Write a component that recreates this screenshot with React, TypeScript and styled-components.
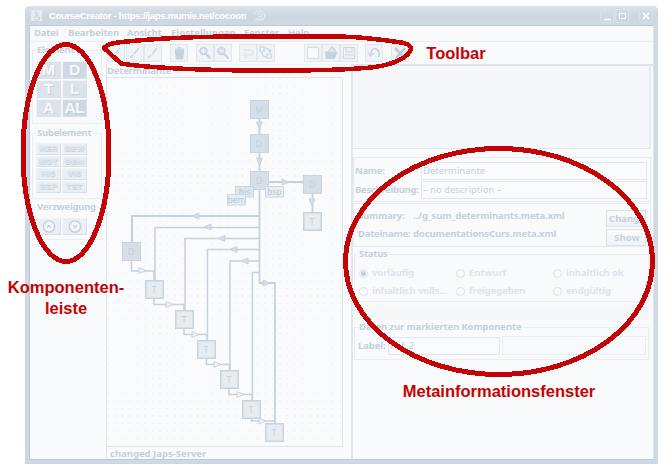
import React from "react";
import styled, { createGlobalStyle } from "styled-components";

const ink = "#c5d1dd";
const red = "#c40404";

const Global = createGlobalStyle`
  * { box-sizing: border-box; }
  body { margin: 0; background: #fff; }
`;

const Page = styled.div`
  position: relative;
  width: 667px;
  height: 472px;
  padding: 6px 9px 8px 25px;
  overflow: hidden;
  background: #fff;
  font: bold 9.5px/12px "Noto Sans", sans-serif;
  color: ${ink};
`;

const Window = styled.div`
  display: flex;
  flex-direction: column;
  width: 633px;
  height: 458px;
  border: 1px solid #cbd6e1;
  border-top: 0;
  border-radius: 5px 5px 0 0;
  background: #cfd8e3;
  padding: 0 3px 3px 3px;
`;

const TitleBar = styled.header`
  display: flex;
  align-items: center;
  height: 19px;
  flex: none;
  margin: 0 -3px;
  padding: 0 4px 0 5px;
  border-radius: 5px 5px 0 0;
  background: linear-gradient(#d9e1ea, #cdd6e1 60%, #d0d9e3);
  color: #fff;
  svg { flex: none; }
`;

const WindowTitle = styled.span<{ $w: number }>`
  width: ${(p) => p.$w}px;
  flex: none;
  margin-left: 6px;
  white-space: nowrap;
  font: bold 9.6px/12px "Liberation Sans", sans-serif;
  letter-spacing: -0.38px;
`;

const WindowButton = styled.span<{ $gap?: number }>`
  display: flex;
  flex: none;
  width: 14px;
  height: 14px;
  margin-left: ${(p) => p.$gap ?? 1}px;
  border: 1px solid #d8e0e9;
  border-radius: 2px;
`;

const Content = styled.div`
  flex: 1;
  min-height: 0;
  display: flex;
  flex-direction: column;
  border: 1px solid #bccad7;
  border-right-color: #dfe6ee;
  background: #f8fafc;
`;

const MenuBar = styled.nav`
  display: flex;
  height: 16px;
  flex: none;
  padding: 1px 0 0 4px;
  border-bottom: 1px solid #e9eef3;
`;

const MenuItem = styled.span<{ $w: number; $ls?: number }>`
  width: ${(p) => p.$w}px;
  white-space: nowrap;
  letter-spacing: ${(p) => p.$ls ?? -0.15}px;
`;

const Body = styled.div`
  display: flex;
  flex: 1;
  min-height: 0;
`;

const Palette = styled.aside`
  width: 76px;
  flex: none;
  padding: 8px 4px 0 2px;
`;

const Group = styled.section<{ $h: number; $gap?: number }>`
  height: ${(p) => p.$h}px;
  margin-bottom: ${(p) => p.$gap ?? 0}px;
  border: 1px solid #e8edf2;
  padding: 0 3px;
`;

const Legend = styled.h3<{ $ls?: number }>`
  width: max-content;
  height: 12px;
  margin: -7px 0 0 0;
  padding: 0 1px;
  background: #f8fafc;
  font: inherit;
  white-space: nowrap;
  letter-spacing: ${(p) => p.$ls ?? -0.25}px;
`;

const Tiles = styled.div<{ $row: number; $top: number }>`
  display: grid;
  grid-template-columns: 25px 25px;
  grid-auto-rows: ${(p) => p.$row}px;
  gap: 1px;
  margin-top: ${(p) => p.$top}px;
`;

const Tile = styled.div<{ $dark?: boolean; $small?: boolean }>`
  display: flex;
  align-items: center;
  justify-content: center;
  background: ${(p) => (p.$small ? "#eaeff4" : p.$dark ? "#cfd9e4" : "#dbe3eb")};
  border: 1px solid;
  border-color: #f0f4f7 #d8e0e8 #d8e0e8 #f0f4f7;
  color: ${(p) => (p.$small ? "#e3eaf0" : "#f8fafc")};
  font: bold ${(p) => (p.$small ? "8px" : "15.5px")}/1 "Liberation Sans", sans-serif;
  letter-spacing: ${(p) => (p.$small ? "0.4px" : "-0.3px")};
  text-shadow: ${(p) => (p.$small ? "0 0 1px #b9c7d5, 0.5px 0.5px 0 #c8d3df" : "1px 1px 0 #c1cedb")};
`;

const Main = styled.div`
  flex: 1;
  min-width: 0;
  display: flex;
  flex-direction: column;
`;

const ToolBar = styled.div`
  display: flex;
  height: 22px;
  flex: none;
  padding: 2px 0 0 1px;
`;

const Tool = styled.span<{ $gap?: number }>`
  width: 18px;
  height: 18px;
  flex: none;
  margin-left: ${(p) => p.$gap ?? 0}px;
  border: 1px solid #e1e7ed;
  background: #f0f4f8;
  svg { display: block; }
`;

const Split = styled.div`
  display: flex;
  flex: 1;
  min-height: 0;
`;

const GraphPane = styled.div`
  width: 245px;
  flex: none;
  border-left: 1px solid #dde4ec;
  border-top: 1px solid #eef2f6;
`;

const GraphTitle = styled.div`
  height: 12px;
  line-height: 12px;
  letter-spacing: -0.2px;
`;

const GraphStatus = styled.div`
  padding-left: 3px;
  line-height: 13px;
`;

const Diagram = styled.svg`
  display: block;
  font: 9px "Noto Sans", sans-serif;
`;

const InfoPane = styled.div`
  flex: 1;
  min-width: 0;
  border-left: 2px solid #dfe6ee;
  border-top: 2px solid #dde4ec;
`;

const Preview = styled.div`
  height: 83px;
  margin-right: 2px;
  background: #f5f7fa;
  border-right: 2px solid #e7ecf2;
  border-bottom: 1px solid #e1e7ee;
`;

const MetaBox = styled.div<{ $top: number; $h: number; $padTop: number }>`
  display: grid;
  align-content: start;
  height: ${(p) => p.$h}px;
  margin: ${(p) => p.$top}px 2px 0 0;
  padding: ${(p) => p.$padTop}px 3px 0 1px;
  border: 1px solid #e6ebf1;
`;

const FieldRow = styled.div<{ $h: number }>`
  display: flex;
  align-items: center;
  height: ${(p) => p.$h}px;
`;

const Caption = styled.span<{ $w: number; $pad?: number; $ls?: number; $lift?: number }>`
  width: ${(p) => p.$w}px;
  flex: none;
  padding-left: ${(p) => p.$pad ?? 0}px;
  padding-bottom: ${(p) => p.$lift ?? 0}px;
  white-space: nowrap;
  letter-spacing: ${(p) => p.$ls ?? 0}px;
`;

const Value = styled.span<{ $lift: number }>`
  flex: 1;
  padding-bottom: ${(p) => p.$lift}px;
  white-space: nowrap;
  letter-spacing: -0.13px;
`;

const Field = styled.span<{ $w?: number }>`
  flex: ${(p) => (p.$w ? "none" : "1")};
  width: ${(p) => (p.$w ? p.$w + "px" : "auto")};
  height: 18px;
  line-height: 15px;
  padding-left: 1px;
  border: 1px solid #e1e7ee;
  background: #fafbfd;
  font-weight: normal;
  white-space: nowrap;
`;

const PushButton = styled.span`
  width: 40px;
  height: 17px;
  margin-right: 1px;
  overflow: hidden;
  padding-left: 2px;
  line-height: 15px;
  border: 1px solid #d9e1e9;
  background: linear-gradient(#fafbfc, #eff3f6);
  white-space: nowrap;
  text-align: center;
`;

const InfoGroup = styled.section<{ $top: number; $h: number }>`
  height: ${(p) => p.$h}px;
  margin: ${(p) => p.$top}px 4px 0 1px;
  padding: 0 2px 0 3px;
  border: 1px solid #e8edf2;
`;

const Radios = styled.div`
  display: grid;
  grid-template-columns: 97px 97px 97px;
  grid-auto-rows: 18px;
  margin-top: 4px;
  color: #dde4ec;
`;

const RadioItem = styled.span`
  display: flex;
  align-items: center;
  padding-left: 1px;
  white-space: nowrap;
  letter-spacing: -0.1px;
`;

const Dot = styled.i<{ $on?: boolean }>`
  width: 9px;
  height: 9px;
  flex: none;
  margin-right: 4px;
  border: 1px solid #dce3eb;
  border-radius: 50%;
  background: ${(p) => (p.$on ? "radial-gradient(circle, #c3cfdb 2px, #f8fafc 3px)" : "transparent")};
`;

const Band = styled.div`
  height: 15px;
  margin: 3px 4px 0 1px;
  background: #f5f7f9;
`;

const EmptyCell = styled.span`
  flex: 1;
  height: 19px;
  margin-left: 2px;
  border: 1px solid #e8edf2;
`;

const Overlay = styled.svg`
  position: absolute;
  left: 0;
  top: 0;
`;

const Note = styled.div<{ $x: number; $y: number; $w: number }>`
  position: absolute;
  left: ${(p) => p.$x}px;
  top: ${(p) => p.$y}px;
  width: ${(p) => p.$w}px;
  color: ${red};
  font: bold 16.5px/21px "Liberation Sans", sans-serif;
  text-align: center;
  white-space: nowrap;
`;

const toolIcons: { gap?: number; art: React.ReactNode }[] = [
  { art: <path d="M3 13L6 10M8 8L12 3" /> },
  { gap: 1, art: <path d="M3 13L6 10M7 9L12 3" /> },
  { art: <path d="M3 13L6 10M7 9L12 3" /> },
  { gap: 8, art: <g><path d="M4.5 5h8l-.8 9h-6.4z" fill={ink} /><path d="M4 4h9M7 2.7h3" /></g> },
  { gap: 8, art: <g><circle cx="6.5" cy="6" r="3.6" fill="#d8e0e8" /><path d="M9 9l4.5 4.5" strokeWidth="2" /><path d="M4.5 6h4M6.5 4v4" stroke="#f8fafc" /></g> },
  { art: <g><circle cx="6.5" cy="6" r="3.6" fill="#d8e0e8" /><path d="M9 9l4.5 4.5" strokeWidth="2" /><path d="M4.5 6h4" stroke="#f8fafc" /></g> },
  { gap: 7, art: <path d="M3 5h7q3 0 3 2.5T10 10H6M7 7.5L4 10l3 3" stroke="#dde4eb" strokeWidth="1.6" /> },
  { art: <g><path d="M2 2h4v4H2zM9 9h4v4H9z" fill="#f8fafc" /><path d="M7 3q5 0 5 4M10.5 5.5L12 7l1.5-2M4 7q0 5 4 5" /></g> },
  { gap: 29, art: <rect x="2.5" y="2.5" width="11" height="11" fill="#fafbfc" stroke="#d5dee7" /> },
  { art: <g><path d="M2.5 7h11l-2 6.5h-8z" fill={ink} /><path d="M5 7L9 2l4 4" fill="#e2e8ee" /></g> },
  { art: <g stroke="#cdd8e2"><rect x="2.5" y="2.5" width="11" height="11" fill="#edf1f5" strokeWidth="1" /><path d="M5 3v4h6V3M4 10h8" strokeWidth="1" /></g> },
  { gap: 7, art: <path d="M13 12V8q-1-4-4-4.500T4.500 9M2 7l2.500 4L8 8" strokeWidth="1.4" /> },
  { gap: 8, art: <path d="M3 3l11 11M13 3L4 13" strokeWidth="2.600" stroke="#bfccd9" /> },
];

const nodes: [number, number, string][] = [
  [250, 100, "M"], [250, 134, "D"], [250, 171, "D"], [303, 175, "D"], [303, 212, "T"],
  [122, 242, "D"], [145, 280, "T"], [175, 310, "T"], [197, 340, "T"], [220, 370, "T"],
  [242, 400, "T"], [265, 423, "T"],
];

const arrows: [number, number, number, boolean?][] = [
  [259.5, 125, 90], [259.5, 161, 90], [285, 182, 0], [312, 202, 90],
  [196, 216, 180], [208, 227, 180], [222, 238.5, 180], [234, 249.5, 180], [245, 261, 180], [266, 283, 0],
  [142, 270.5, 0, true], [169, 304.5, 0, true], [195, 334.5, 0, true], [217, 364.5, 0, true], [240, 394.5, 0, true], [262, 421, 0, true],
];

const tags: [number, number, string][] = [[235, 186, "his"], [227, 194, "bem"], [265, 186, "bsp"]];

const Graph = () => (
  <Diagram width="237" height="370" viewBox="107 77 237 370">
    <defs>
      <pattern id="grid" x="107" y="78" width="7.5" height="7.5" patternUnits="userSpaceOnUse">
        <rect width="1" height="1" fill="#e1e7ee" />
      </pattern>
    </defs>
    <rect x="107" y="77" width="236" height="370" fill="#fafbfd" />
    <rect x="107" y="77" width="236" height="370" fill="url(#grid)" />
    <path d="M107 77.500H342.500V446.500H107" fill="none" stroke="#e0e6ee" />
    <g fill="none" stroke={ink} strokeWidth="1.500">
      <path d="M259.500 119V134M259.500 152V171M269 182H303M312.500 194V212M259.500 190V283H275V423" strokeWidth="1.800" />
      <path d="M259 216H132V242" strokeWidth="2" />
      <path d="M259 227.500H155V280M259 238.500H185V310M259 249.500H207.500V340M259 261H230V370M259 272.500H252.500V400" />
      <path d="M131.500 261V271H154V280M154 299V304.500H184V310M184 329V334.500H207V340M206.500 359V364.500H229.500V370M229 389V394.500H252V400M251.500 419V421H275" />
    </g>
    {arrows.map(([x, y, a, light], i) => (
      <path key={i} transform={`translate(${x} ${y}) rotate(${a})`} d="M-3-3L4 0L-3 3Z" fill={light ? "#edf1f5" : "#d5dee7"} stroke={ink} strokeWidth="0.900" />
    ))}
    {nodes.map(([x, y, t], i) => (
      <g key={i}>
        <rect x={x + 0.5} y={y + 0.5} width="18" height="18" fill={t === "T" ? "#e7ecf1" : "#d6dfe8"} stroke="#c9d4df" />
        {t === "T" && <rect x={x + 1.5} y={y + 1.5} width="16" height="16" fill="none" stroke="#d6dfe8" />}
        <text x={x + 9} y={y + 13} textAnchor="middle" fill="#c4d0dc">{t}</text>
      </g>
    ))}
    {tags.map(([x, y, t]) => (
      <g key={t}>
        <rect x={x + 0.5} y={y + 0.5} width="18" height="10.500" fill={t === "his" ? "#dfe6ed" : "#e9eef3"} stroke="#ced8e3" />
        <text x={x + 9.500} y={y + 8.500} textAnchor="middle" fontSize="8.500" fill="#b9c7d5">{t}</text>
      </g>
    ))}
  </Diagram>
);

export default function App() {
  return (
    <Page>
      <Global />
      <Window>
        <TitleBar>
          <svg width="12" height="13" viewBox="0 0 12 13">
            <rect x="0" y="1" width="11" height="11" fill="#e7ecf1" />
            <path d="M6 2Q3 4 6 7M7 4Q5 6 7 7M3 8h5v3H3M8 8.500q2 0 0 2" fill="none" stroke="#c3cfda" />
          </svg>
          <WindowTitle $w={204}>CourseCreator - https://japs.mumie.net/cocoon</WindowTitle>
          <svg width="14" height="13" viewBox="0 0 14 13" fill="none" stroke="#e8edf2">
            <path d="M1 5q5-5 9-2q3 3 1 6q-5 3-8 0M4 5q4-2 5 1t-4 1M2 11h9" />
          </svg>
          <WindowButton $gap={333}>
            <svg width="12" height="12"><path d="M3 9.500h7" stroke="#fff" strokeWidth="1.500" /></svg>
          </WindowButton>
          <WindowButton>
            <svg width="12" height="12"><rect x="3.500" y="3.500" width="6" height="5" fill="none" stroke="#fff" /></svg>
          </WindowButton>
          <WindowButton $gap={10}>
            <svg width="12" height="12"><path d="M3 3l6 6M9 3l-6 6" stroke="#fff" strokeWidth="1.500" /></svg>
          </WindowButton>
        </TitleBar>
        <Content>
          <MenuBar>
            <MenuItem $w={34}>Datei</MenuItem>
            <MenuItem $w={59}>Bearbeiten</MenuItem>
            <MenuItem $w={44}>Ansicht</MenuItem>
            <MenuItem $w={73} $ls={0}>Einstellungen</MenuItem>
            <MenuItem $w={44}>Fenster</MenuItem>
            <MenuItem $w={30}>Help</MenuItem>
          </MenuBar>
          <Body>
            <Palette>
              <Group $h={74} $gap={9}>
                <Legend>Element</Legend>
                <Tiles $row={18} $top={5}>
                  <Tile>M</Tile><Tile $dark>D</Tile>
                  <Tile>T</Tile><Tile>L</Tile>
                  <Tile>A</Tile><Tile $dark>AL</Tile>
                </Tiles>
              </Group>
              <Group $h={66} $gap={8}>
                <Legend>Subelement</Legend>
                <Tiles $row={11.7} $top={4}>
                  {["HER", "BEW", "MOT", "BEM", "HIS", "VIS", "BSP", "TST"].map((t) => (
                    <Tile key={t} $small>{t}</Tile>
                  ))}
                </Tiles>
              </Group>
              <Group $h={33}>
                <Legend>Verzweigung</Legend>
                <Tiles $row={17} $top={5}>
                  {["M6 9l2-2l2 2", "M6 7l2 2l2-2"].map((d) => (
                    <Tile key={d} $small>
                      <svg width="16" height="15" viewBox="0 0 16 16" fill="#f3f6f9" stroke="#c2ceda">
                        <circle cx="8" cy="8" r="6" strokeWidth="1.500" />
                        <path d={d} fill="none" strokeWidth="1.500" />
                      </svg>
                    </Tile>
                  ))}
                </Tiles>
              </Group>
            </Palette>
            <Main>
              <ToolBar>
                {toolIcons.map((t, i) => (
                  <Tool key={i} $gap={t.gap}>
                    <svg width="16" height="16" fill="none" stroke={ink} strokeWidth="1.200">{t.art}</svg>
                  </Tool>
                ))}
              </ToolBar>
              <Split>
                <GraphPane>
                  <GraphTitle>Determinante</GraphTitle>
                  <Graph />
                  <GraphStatus>changed Japs-Server</GraphStatus>
                </GraphPane>
                <InfoPane>
                  <Preview />
                  <MetaBox $top={8} $h={45} $padTop={3}>
                    <FieldRow $h={19}>
                      <Caption $w={66} $ls={-0.3}>Name:</Caption>
                      <Field>Determinante</Field>
                    </FieldRow>
                    <FieldRow $h={19}>
                      <Caption $w={66} $ls={-0.3}>Beschreibung:</Caption>
                      <Field>– no description –</Field>
                    </FieldRow>
                  </MetaBox>
                  <MetaBox $top={1} $h={44} $padTop={4}>
                    <FieldRow $h={20}>
                      <Caption $w={58} $pad={3} $ls={-0.2} $lift={4}>Summary:</Caption>
                      <Value $lift={4}>../g_sum_determinants.meta.xml</Value>
                      <PushButton>Change</PushButton>
                    </FieldRow>
                    <FieldRow $h={19}>
                      <Caption $w={58} $pad={3} $ls={-0.25} $lift={8}>Dateiname:</Caption>
                      <Value $lift={8}>documentationsCurs.meta.xml</Value>
                      <PushButton>Show</PushButton>
                    </FieldRow>
                  </MetaBox>
                  <InfoGroup $top={7} $h={48}>
                    <Legend>Status</Legend>
                    <Radios>
                      <RadioItem><Dot $on />vorläufig</RadioItem>
                      <RadioItem><Dot />Entwurf</RadioItem>
                      <RadioItem><Dot />inhaltlich ok</RadioItem>
                      <RadioItem><Dot />inhaltlich volls...</RadioItem>
                      <RadioItem><Dot />freigegeben</RadioItem>
                      <RadioItem><Dot />endgültig</RadioItem>
                    </Radios>
                  </InfoGroup>
                  <Band />
                  <InfoGroup $top={7} $h={33}>
                    <Legend $ls={-0.12}>Daten zur markierten Komponente</Legend>
                    <FieldRow $h={25}>
                      <Caption $w={30} $ls={-0.1}>Label:</Caption>
                      <Field $w={112}>auf_2</Field>
                      <EmptyCell />
                    </FieldRow>
                  </InfoGroup>
                </InfoPane>
              </Split>
            </Main>
          </Body>
        </Content>
      </Window>
      <Overlay width="667" height="472" fill="none" stroke={red} strokeWidth="5" shapeRendering="crispEdges">
        <ellipse cx="66" cy="153" rx="43" ry="108.500" />
        <ellipse cx="499" cy="261.500" rx="153.500" ry="113" />
        <path d="M104 48Q108 43 122 42C160 38 200 36.500 240 36.500H340C365 37 385 40 404 43Q411 45 411 49C409 57 395 64 375 67C350 70 310 70.500 280 70.500C230 71 155 69 121 63.500Z" strokeWidth="4.500" strokeLinejoin="round" />
      </Overlay>
      <Note $x={425} $y={43} $w={62}>Toolbar</Note>
      <Note $x={6} $y={277} $w={120}>Komponenten-<br />leiste</Note>
      <Note $x={402} $y={381} $w={194}>Metainformationsfenster</Note>
    </Page>
  );
}
